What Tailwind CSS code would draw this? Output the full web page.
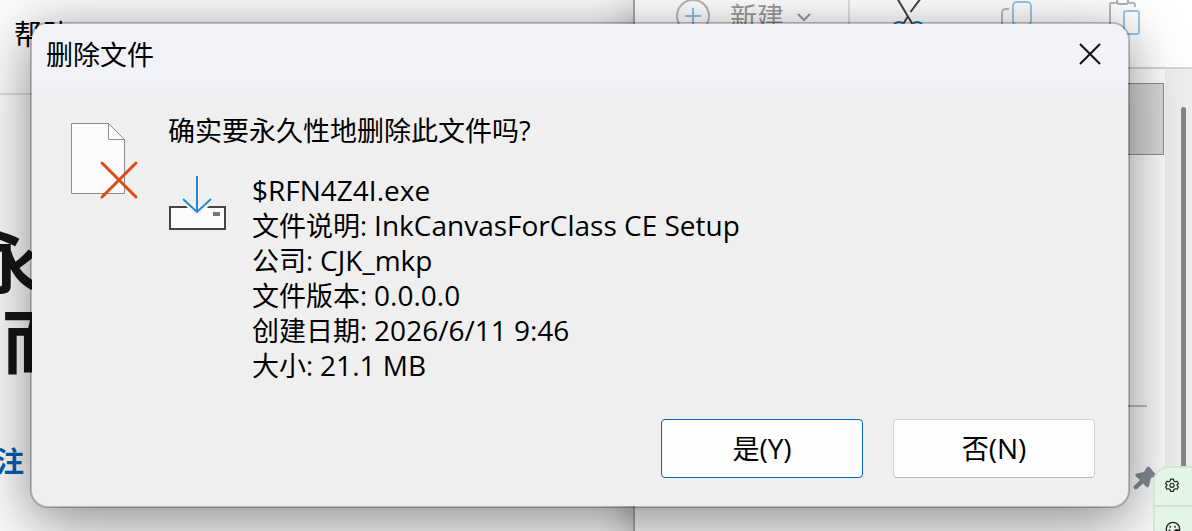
<!DOCTYPE html>
<html lang="zh-CN">
  <head>
    <meta charset="UTF-8">
    <meta name="viewport" content="width=device-width, initial-scale=1.0">
    <title>删除文件</title>
    <script src="https://cdn.jsdelivr.net/npm/@tailwindcss/browser@4"></script>
  </head>

  <body class="relative h-screen overflow-hidden bg-white font-['Open_Sans','Noto_Sans_CJK_SC',sans-serif] text-black">

    <!-- windows behind the dialog -->
    <div class="flex h-full">
      <!-- browser -->
      <div class="w-[633px] shrink-0 overflow-hidden bg-[#fafafa]">
        <div class="h-[95px] border-b-2 border-[#dcdcdc] pt-3.5 pl-3.5 text-[28px] leading-10">帮助</div>
        <div class="pt-[127px] text-[68px] leading-20 font-bold text-[#161616]">
          <div class="-ml-7">永</div>
          <div class="pl-0.5">而</div>
        </div>
        <a href="#" class="mt-[59px] -ml-1 block text-[28px] leading-10 font-bold text-[#0060b0]">注</a>
      </div>

      <!-- explorer -->
      <div class="flex min-w-0 flex-1 flex-col border-l-2 border-[#a8a8a8] shadow-[0_10px_40px_rgba(0,0,0,0.35)]">
        <div class="flex h-[69px] shrink-0 items-start border-b-2 border-[#d4d4d4] bg-white pl-[41px]">
          <svg class="h-8 w-9" viewBox="0 0 36 32" fill="none" stroke-width="2">
            <circle cx="17" cy="16" r="16" stroke="#b8b8b8"/>
            <path d="M17 8v16M9 16h16" stroke="#8dbfe5"/>
          </svg>
          <span class="ml-[18px] text-[27px] leading-[34px] text-[#9a9a9a]">新建</span>
          <svg class="ml-3 h-8 w-4" viewBox="0 0 16 32" fill="none" stroke="#999" stroke-width="2"><path d="M2 14l6 6 6-6"/></svg>
          <div class="ml-9 h-8 w-0.5 bg-[#e2e2e2]"></div>
          <svg class="ml-[42px] h-10 w-9" viewBox="0 0 36 40" fill="none" stroke-width="2">
            <path d="M5-2l16 27M29-2L18.500 12M15.500 17l-5 8" stroke="#444"/>
            <circle cx="7" cy="28" r="6" stroke="#1f77bd"/>
            <circle cx="25" cy="28" r="6" stroke="#1f77bd"/>
          </svg>
          <svg class="ml-[71px] h-10 w-9" viewBox="0 0 36 40" fill="none" stroke-width="2">
            <path d="M10 9H7q-4 0-4 4v16" stroke="#bbb"/>
            <rect x="14" y="2" width="18" height="23" rx="4" stroke="#9cc9ea"/>
          </svg>
          <svg class="ml-[71px] h-10 w-9" viewBox="0 0 36 40" fill="none" stroke-width="2">
            <path d="M4 28V4q0-1 1-1h5M23 3h4q2 0 2 2v2" stroke="#b8b8b8"/>
            <rect x="11" y="-1" width="11" height="5" rx="2" stroke="#b0b0b0"/>
            <rect x="18" y="11" width="15" height="23" rx="2" stroke="#9cc9ea" fill="#fff"/>
          </svg>
        </div>
        <div class="flex flex-1 bg-[#fafafa]">
          <div class="flex-1 pt-3.5">
            <div class="mr-px h-[72px] border border-[#8e8e8e] bg-[#d6d6d6]"></div>
            <div class="mt-[250px] mr-[18px] h-0.5 bg-[#bcbcbc]"></div>
            <svg class="mt-[59px] mr-2 ml-auto size-6" viewBox="0 0 24 24" fill="#838b92">
              <path d="M14 1q1-1 2.500 0l6 7q1 2-.5 2.500l-4 1.500-2 8q-1 2-2.500 1L10 17.500l-6 5.500q-2 1-3-.500t0-2.500l6-6-4-3.500q-1.500-2 .5-3L11 6z"/>
            </svg>
          </div>
          <div class="w-[27px] bg-[#ededed] pt-[38px] pl-4">
            <div class="h-full w-[5px] rounded-full bg-[#858585]"></div>
          </div>
        </div>
      </div>
    </div>

    <!-- delete confirmation -->
    <div class="absolute inset-x-0 top-0 pt-[22px] pr-[62px] pl-[30px]">
      <div role="dialog" aria-labelledby="title" class="overflow-hidden rounded-[18px] border-2 border-black/25 bg-[#efefef] bg-clip-padding shadow-[0_18px_60px_rgba(0,0,0,0.35),0_0_40px_rgba(0,0,0,0.12)]">
        <div class="flex h-[63px] items-center justify-between bg-[#f1f3f9] pr-[26px] pb-0.5 pl-3.5">
          <h1 id="title" class="text-[27px] leading-9">删除文件</h1>
          <button type="button" aria-label="关闭">
            <svg class="size-6" viewBox="0 0 24 24" fill="none" stroke="#111" stroke-width="2"><path d="M2 1l20 20M22 1L2 21"/></svg>
          </button>
        </div>

        <div class="flex pt-[26px] pl-[37px] text-[27px] leading-[35px]">
          <svg class="mt-2 h-[79px] w-[70px] shrink-0" viewBox="0 0 70 79" fill="none">
            <path d="M2.500 2.500h37l16 16v54h-53z" fill="#fbfbfb" stroke="#8c8c8c"/>
            <path d="M39.500 2.500v16h16" stroke="#8c8c8c"/>
            <path d="M33 42l34 34M67 42L33 76" stroke="#dd4a14" stroke-width="3" stroke-linecap="round"/>
          </svg>
          <div class="ml-[29px]">
            <p>确实要永久性地删除此文件吗?</p>
            <div class="mt-[25px] flex">
              <svg class="mt-0.5 h-[58px] w-[60px] shrink-0" viewBox="0 0 60 58" fill="none">
                <path d="M2 32h55v22H2z" fill="#fbfbfb" stroke="#454545" stroke-width="2"/>
                <path d="M17 30h25L29 42z" fill="#f4f4f4"/>
                <path d="M45 37h7v4h-7z" fill="#777"/>
                <path d="M29 1v36M15 24l14 13L43 24" stroke="#2587cc" stroke-width="2"/>
              </svg>
              <ul class="ml-6">
                <li class="h-[35px]"><span class="text-[28px]">$RFN4Z4I.exe</span></li>
                <li class="h-[35px]">文件说明: <span class="text-[28px]">InkCanvasForClass CE Setup</span></li>
                <li class="h-[35px]">公司: <span class="text-[28px]">CJK_mkp</span></li>
                <li class="h-[35px]">文件版本: <span class="text-[28px]">0.0.0.0</span></li>
                <li class="h-[35px]">创建日期: <span class="text-[28px]">2026/6/11 9:46</span></li>
                <li class="h-[35px]">大小: <span class="text-[28px]">21.1 MB</span></li>
              </ul>
            </div>
          </div>
        </div>

        <div class="flex justify-end gap-[30px] pt-9 pr-[33px] pb-7 text-[27px] leading-9">
          <button type="button" class="h-[59px] w-[202px] rounded border border-[#0067c0] bg-[#fdfdfd]">是<span class="text-[28px]">(Y)</span></button>
          <button type="button" class="h-[59px] w-[202px] rounded border border-[#d0d0d0] border-b-[#bbb] bg-[#fdfdfd]">否<span class="text-[28px]">(N)</span></button>
        </div>
      </div>
    </div>

    <!-- floating widget -->
    <div class="absolute right-0 bottom-0 h-[65px] w-[39px] overflow-hidden rounded-tl-2xl border-t-2 border-l-2 border-[#cfe6d4] bg-[#e2f5e7]">
      <button type="button" aria-label="设置" class="flex h-[39px] w-full items-center border-b-2 border-[#cfe0d3] pb-1 pl-2.5">
        <svg class="size-3.5" viewBox="0 0 24 24" fill="none" stroke="#222" stroke-width="2" stroke-linejoin="round">
          <path d="M9.500 2h5l.7 3.200 2.300 1.300 3.100-1 2.400 4.200-2.300 2.300v1l2.300 2.200-2.400 4.200-3.100-1-2.300 1.300-.7 3.200h-5l-.7-3.200-2.300-1.300-3.100 1L1 15.200 3.300 13v-1L1 9.700l2.400-4.200 3.100 1 2.300-1.300z"/>
          <circle cx="12" cy="12.500" r="3.500"/>
        </svg>
      </button>
      <button type="button" aria-label="表情" class="flex w-full pt-3.5 pl-2.5">
        <svg class="size-4" viewBox="0 0 24 24" fill="none" stroke="#222" stroke-width="2">
          <circle cx="12" cy="12" r="10"/>
          <path d="M8 7v3M15 7v3M6 13q3 5 8 4"/>
          <circle cx="18" cy="17" r="4" fill="#111"/>
        </svg>
      </button>
    </div>
  </body>
</html>
